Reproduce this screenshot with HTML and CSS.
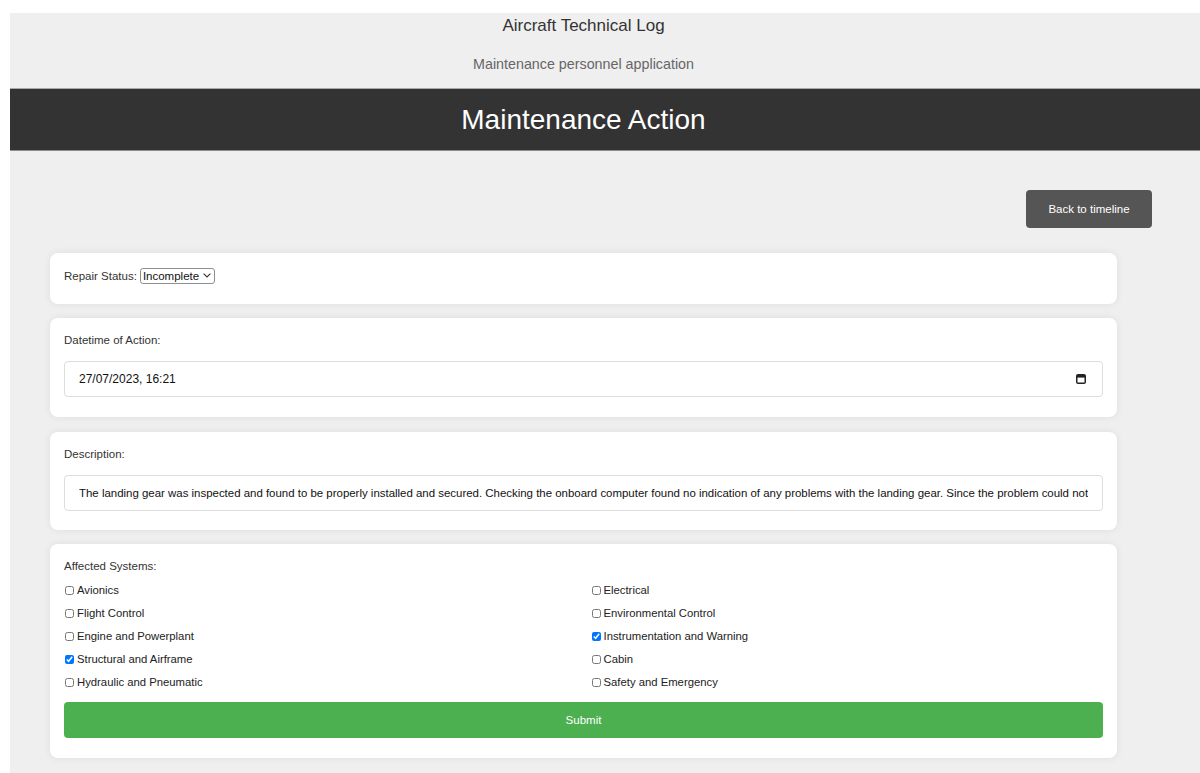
FILE: index.html
```html
<!DOCTYPE html>
<html lang="en">
<head>
<meta charset="utf-8">
<title>Maintenance Action</title>
<link rel="stylesheet" href="styles.css">
</head>
<body>
<div class="page">
  <header class="site-header">
    <div class="brand">
      <div class="brand-title">Aircraft Technical Log</div>
      <div class="brand-sub">Maintenance personnel application</div>
    </div>
    <div class="page-bar">
      <h1 class="page-title">Maintenance Action</h1>
    </div>
  </header>

  <main class="content">
    <div class="toolbar">
      <button type="button" class="btn-back">Back to timeline</button>
    </div>

    <form class="form">
      <section class="card">
        <div class="field field-inline">
          <label class="label" for="status">Repair Status:</label>
          <span class="select-box">
            <select id="status" class="select">
              <option selected>Incomplete</option>
              <option>Complete</option>
            </select>
            <svg class="chevron" width="8" height="5" viewBox="0 0 8 5" aria-hidden="true"><path d="M0.6 0.6 L4 4 L7.4 0.6" fill="none" stroke="#333" stroke-width="1.1"/></svg>
          </span>
        </div>
      </section>

      <section class="card">
        <div class="field">
          <label class="label label-block" for="action-time">Datetime of Action:</label>
          <div class="date-input">
            <input id="action-time" class="date-text" type="text" value="27/07/2023, 16:21">
            <svg class="calendar" width="10" height="10" viewBox="0 0 10 10" aria-hidden="true">
              <rect x="0.75" y="0.75" width="8.5" height="8.5" rx="1.3" fill="none" stroke="#222" stroke-width="1.5"/>
              <rect x="1" y="1" width="8" height="2.6" fill="#222"/>
            </svg>
          </div>
        </div>
      </section>

      <section class="card card-desc">
        <div class="field">
          <label class="label label-block" for="description">Description:</label>
          <input id="description" class="text-input" type="text" value="The landing gear was inspected and found to be properly installed and secured. Checking the onboard computer found no indication of any problems with the landing gear. Since the problem could not be reproduced, the aircraft was released for service.">
        </div>
      </section>

      <section class="card">
        <div class="field">
          <div class="label label-block label-tight">Affected Systems:</div>
          <div class="systems">
            <label class="check"><input type="checkbox">Avionics</label>
            <label class="check"><input type="checkbox">Electrical</label>
            <label class="check"><input type="checkbox">Flight Control</label>
            <label class="check"><input type="checkbox">Environmental Control</label>
            <label class="check"><input type="checkbox">Engine and Powerplant</label>
            <label class="check"><input type="checkbox" checked>Instrumentation and Warning</label>
            <label class="check"><input type="checkbox" checked>Structural and Airframe</label>
            <label class="check"><input type="checkbox">Cabin</label>
            <label class="check"><input type="checkbox">Hydraulic and Pneumatic</label>
            <label class="check"><input type="checkbox">Safety and Emergency</label>
          </div>
          <button type="submit" class="btn-submit">Submit</button>
        </div>
      </section>
    </form>
  </main>
</div>
</body>
</html>
```

FILE: styles.css
```css
* {
  box-sizing: border-box;
}

html,
body {
  margin: 0;
  padding: 0;
}

body {
  background: #fff;
  font-family: "Liberation Sans", Arial, Helvetica, sans-serif;
  color: #333;
}

.page {
  margin: 13px 0 0 10px;
  min-height: 760px;
  background: #efefef;
}

/* header */
.brand {
  width: 1147px;
  padding: 3px 0 15px;
  text-align: center;
}

.brand-title {
  font-size: 17px;
  line-height: 20px;
  color: #333;
}

.brand-sub {
  margin-top: 19px;
  font-size: 14.3px;
  line-height: 18px;
  color: #666;
}

.page-bar {
  background: #333;
  border-top: 1px solid #a8a8a8;
  border-bottom: 1px solid #8c8c8c;
}

.page-title {
  width: 1147px;
  height: 61px;
  margin: 0;
  font-size: 28px;
  font-weight: normal;
  line-height: 61px;
  text-align: center;
  color: #fff;
}

/* main area */
.content {
  width: 1147px;
  padding-top: 39px;
}

.toolbar {
  display: flex;
  justify-content: flex-end;
  padding-right: 5px;
  margin-bottom: 25px;
}

.btn-back {
  width: 126px;
  height: 38px;
  border: none;
  border-radius: 4px;
  background: #555;
  color: #fff;
  font-family: inherit;
  font-size: 11.5px;
  cursor: pointer;
}

.form {
  display: flex;
  flex-direction: column;
  gap: 14px;
  margin: 0 40px;
}

.card {
  padding: 14px;
  background: #fff;
  border-radius: 8px;
  box-shadow: 0 0 8px rgba(0, 0, 0, 0.07);
}

.card-desc {
  margin-top: 1px;
  padding-bottom: 13px;
}

.field {
  margin-bottom: 6px;
}

.label {
  font-size: 11.5px;
  line-height: 16px;
  color: #333;
}

.label-block {
  display: block;
  margin-bottom: 13px;
}

.label-tight {
  margin-bottom: 7px;
}

/* repair status row */
.field-inline {
  display: flex;
  align-items: center;
  height: 17px;
}

.select-box {
  display: inline-flex;
  align-items: center;
  height: 16px;
  margin-left: 3px;
  padding: 0 3px 0 2px;
  border: 1px solid #8f8f8f;
  border-radius: 3px;
  background: #fff;
}

.select {
  appearance: none;
  -webkit-appearance: none;
  border: none;
  background: transparent;
  padding: 0;
  margin: 0;
  font-family: inherit;
  font-size: 11.5px;
  line-height: 14px;
  color: #111;
  outline: none;
}

.chevron {
  display: block;
  margin-left: 3px;
}

/* text inputs */
.date-input {
  display: flex;
  align-items: center;
  height: 36px;
  padding: 0 16px 0 14px;
  border: 1px solid #ddd;
  border-radius: 4px;
  background: #fff;
}

.date-text {
  flex: 1;
  min-width: 0;
  border: none;
  padding: 0;
  font-family: inherit;
  font-size: 12px;
  color: #111;
  outline: none;
  background: transparent;
}

.calendar {
  display: block;
  flex: none;
}

.text-input {
  display: block;
  width: 100%;
  height: 36px;
  padding: 0 14px;
  border: 1px solid #ddd;
  border-radius: 4px;
  background: #fff;
  font-family: inherit;
  font-size: 11.45px;
  color: #111;
  outline: none;
}

/* affected systems */
.systems {
  display: grid;
  grid-template-columns: 1fr 1fr;
  column-gap: 14px;
  row-gap: 7px;
}

.check {
  display: flex;
  align-items: center;
  height: 16px;
  margin-top: 1px;
  margin-bottom: -1px;
  font-size: 11.3px;
  color: #222;
}

.check input {
  width: 9px;
  height: 9px;
  margin: 0 3px 0 1px;
}

.btn-submit {
  display: block;
  width: 100%;
  height: 36px;
  margin-top: 13px;
  border: none;
  border-radius: 4px;
  background: #4caf50;
  color: #fff;
  font-family: inherit;
  font-size: 11.5px;
  cursor: pointer;
}
```
